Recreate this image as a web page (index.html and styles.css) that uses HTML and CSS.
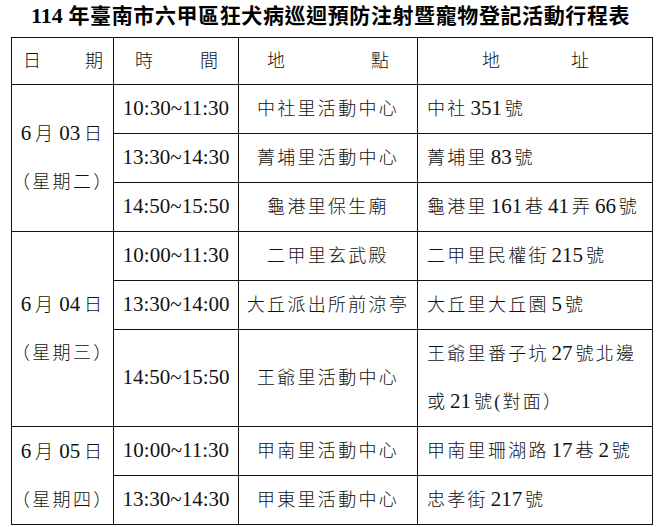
FILE: index.html
```html
<!DOCTYPE html>
<html lang="zh-Hant">
<head>
<meta charset="utf-8">
<title>114年臺南市六甲區狂犬病巡迴預防注射暨寵物登記活動行程表</title>
<link rel="stylesheet" href="styles.css">
</head>
<body>
<h1 class="title"><span class="tn">114</span> 年臺南市六甲區狂犬病巡迴預防注射暨寵物登記活動行程表</h1>
<table class="sched">
  <colgroup>
    <col class="c-date">
    <col class="c-time">
    <col class="c-place">
    <col class="c-addr">
  </colgroup>
  <thead>
    <tr>
      <th><div class="hd hd-date"><span>日</span><span>期</span></div></th>
      <th><div class="hd hd-time"><span>時</span><span>間</span></div></th>
      <th><div class="hd hd-place"><span>地</span><span>點</span></div></th>
      <th><div class="hd hd-addr"><span>地</span><span>址</span></div></th>
    </tr>
  </thead>
  <tbody>
    <tr>
      <td class="date" rowspan="3"><span class="n">6</span> 月 <span class="n">03</span> 日<br>（星期二）</td>
      <td class="time"><span class="n">10:30~11:30</span></td>
      <td class="place">中社里活動中心</td>
      <td class="addr">中社 <span class="n">351</span> 號</td>
    </tr>
    <tr>
      <td class="time"><span class="n">13:30~14:30</span></td>
      <td class="place">菁埔里活動中心</td>
      <td class="addr">菁埔里 <span class="n">83</span> 號</td>
    </tr>
    <tr>
      <td class="time"><span class="n">14:50~15:50</span></td>
      <td class="place">龜港里保生廟</td>
      <td class="addr">龜港里 <span class="n">161</span> 巷 <span class="n">41</span> 弄 <span class="n">66</span> 號</td>
    </tr>
    <tr>
      <td class="date" rowspan="3"><span class="n">6</span> 月 <span class="n">04</span> 日<br>（星期三）</td>
      <td class="time"><span class="n">10:00~11:30</span></td>
      <td class="place">二甲里玄武殿</td>
      <td class="addr">二甲里民權街 <span class="n">215</span> 號</td>
    </tr>
    <tr>
      <td class="time"><span class="n">13:30~14:00</span></td>
      <td class="place">大丘派出所前涼亭</td>
      <td class="addr">大丘里大丘園 <span class="n">5</span> 號</td>
    </tr>
    <tr>
      <td class="time"><span class="n">14:50~15:50</span></td>
      <td class="place">王爺里活動中心</td>
      <td class="addr">王爺里番子坑 <span class="n">27</span> 號北邊<br>或 <span class="n">21</span> 號(對面）</td>
    </tr>
    <tr>
      <td class="date" rowspan="2"><span class="n">6</span> 月 <span class="n">05</span> 日<br>（星期四）</td>
      <td class="time"><span class="n">10:00~11:30</span></td>
      <td class="place">甲南里活動中心</td>
      <td class="addr">甲南里珊湖路 <span class="n">17</span> 巷 <span class="n">2</span> 號</td>
    </tr>
    <tr>
      <td class="time"><span class="n">13:30~14:30</span></td>
      <td class="place">甲東里活動中心</td>
      <td class="addr">忠孝街 <span class="n">217</span> 號</td>
    </tr>
  </tbody>
</table>
</body>
</html>
```

FILE: styles.css
```css
html, body {
  margin: 0;
  padding: 0;
  background: #ffffff;
}

body {
  font-family: "Liberation Serif", "Noto Sans CJK TC", serif;
  color: #111111;
  width: 661px;
}

.title {
  margin: 0;
  height: 37px;
  line-height: 32px;
  font-size: 21px;
  font-weight: 700;
  letter-spacing: 0.6px;
  text-align: center;
  color: #000000;
}

.tn {
  font-size: 22px;
  letter-spacing: 0;
}

.sched {
  margin-left: 11px;
  width: 641px;
  border-collapse: collapse;
  table-layout: fixed;
  font-size: 18px;
  font-weight: 300;
  letter-spacing: 2.3px;
}

.c-date { width: 102px; }
.c-time { width: 125px; }
.c-place { width: 179px; }
.c-addr { width: 235px; }

.sched th,
.sched td {
  border: 1px solid #111111;
  padding: 0;
  line-height: 48px;
  white-space: nowrap;
  vertical-align: middle;
}

.sched th {
  font-weight: 300;
  line-height: 46px;
  letter-spacing: 0;
}

.n {
  font-size: 21px;
  line-height: 1;
  letter-spacing: 0;
}

.hd {
  display: flex;
  justify-content: space-between;
}

.hd-date { padding: 0 10px 0 11px; }
.hd-time { padding: 0 20px 0 21px; }
.hd-place { padding: 0 28px 0 28px; }
.hd-addr { padding: 0 63px 0 64px; }

.date {
  text-align: center;
  word-spacing: -3px;
}

.time {
  text-align: center;
}

.place {
  text-align: center;
}

.addr {
  text-align: left;
  padding-left: 9px !important;
  word-spacing: -4px;
}
```
